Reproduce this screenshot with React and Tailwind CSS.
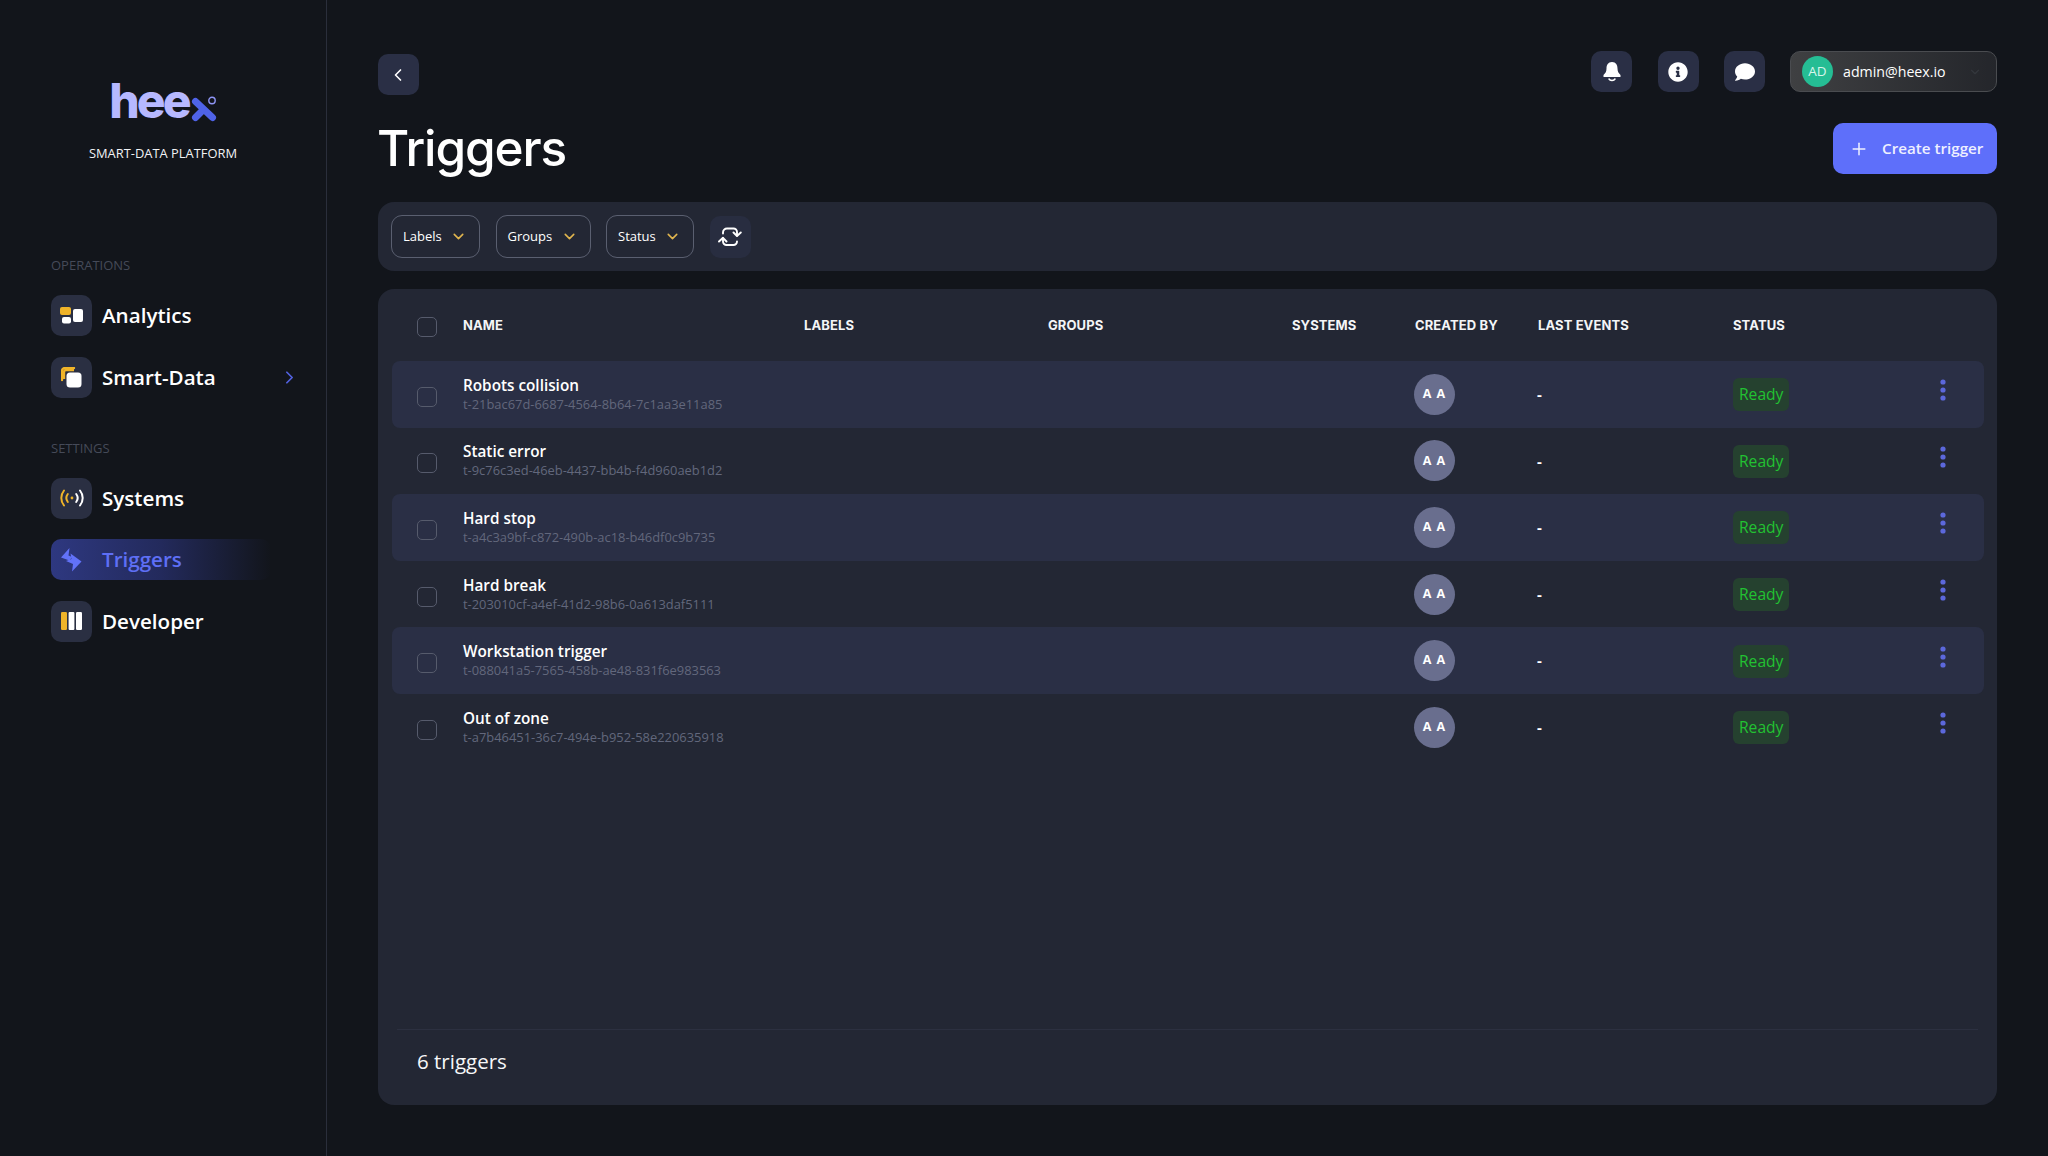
import React from 'react';
import { ChevronDown, ChevronLeft, ChevronRight, Plus } from 'lucide-react';
import { FaInfoCircle, FaComment } from 'react-icons/fa';

const triggers = [
  { name: 'Robots collision', id: 't-21bac67d-6687-4564-8b64-7c1aa3e11a85' },
  { name: 'Static error', id: 't-9c76c3ed-46eb-4437-bb4b-f4d960aeb1d2' },
  { name: 'Hard stop', id: 't-a4c3a9bf-c872-490b-ac18-b46df0c9b735' },
  { name: 'Hard break', id: 't-203010cf-a4ef-41d2-98b6-0a613daf5111' },
  { name: 'Workstation trigger', id: 't-088041a5-7565-458b-ae48-831f6e983563' },
  { name: 'Out of zone', id: 't-a7b46451-36c7-494e-b952-58e220635918' },
];

const columns = 'grid grid-cols-[46px_341px_244px_244px_123px_123px_195px_1fr] items-center';

const AnalyticsIcon = () => (
  <svg width="24" height="17" viewBox="0 0 24 17">
    <rect x="0" y="0" width="11" height="8" rx="2" fill="#f0b429" />
    <rect x="2" y="10" width="9" height="6.5" rx="2" fill="#fff" />
    <rect x="13" y="2" width="10" height="13" rx="2" fill="#fff" />
  </svg>
);

const SmartDataIcon = () => (
  <svg width="21" height="21" viewBox="0 0 21 21">
    <path d="M1 13V4a3 3 0 0 1 3-3h9" fill="none" stroke="#f0b429" strokeWidth="2.4" strokeLinecap="round" />
    <path d="M3 12V5a2 2 0 0 1 2-2h8" fill="none" stroke="#f0b429" strokeWidth="2.4" />
    <rect x="5.5" y="5.5" width="15" height="15" rx="3.5" fill="#fff" />
  </svg>
);

const SystemsIcon = () => (
  <svg width="24" height="18" viewBox="0 0 24 18" fill="none" strokeWidth="2" strokeLinecap="round">
    <path d="M4 1.5C0.4 6 0.4 12 4 16.5" stroke="#f0b429" />
    <path d="M7.8 5C6 7.4 6 10.6 7.8 13" stroke="#f0b429" />
    <circle cx="12" cy="9" r="1.4" fill="#f0b429" stroke="none" />
    <path d="M16.2 5C18 7.4 18 10.6 16.2 13" stroke="#fff" />
    <path d="M20 1.5C23.6 6 23.6 12 20 16.5" stroke="#fff" />
  </svg>
);

const TriggersIcon = () => (
  <svg width="21" height="24" viewBox="0 0 21 24" fill="#6272f8">
    <path d="M8.5 0L0 9.5L8.5 12.5L11 9L7.5 7.5Z" />
    <path d="M9.5 5.5L20.5 13.5L11 23.5L12 16L5 13L10.5 11Z" />
  </svg>
);

const DeveloperIcon = () => (
  <svg width="21" height="18" viewBox="0 0 21 18">
    <rect x="0" y="0" width="6" height="18" rx="1.2" fill="#f0b429" />
    <rect x="7.6" y="0" width="5.8" height="18" rx="1" fill="#fff" />
    <rect x="15" y="0" width="6" height="18" rx="1.2" fill="#fff" />
  </svg>
);

const BellIcon = () => (
  <svg width="20" height="21" viewBox="0 0 20 21" fill="#fff">
    <path d="M10 1C6 1 4.5 4 4.5 7.5C4.5 10.5 3.5 12 1.5 14V16H18.5V14C16.5 12 15.5 10.5 15.5 7.5C15.5 4 14 1 10 1Z" />
    <path d="M6.8 17.5C7.5 20 12.5 20 13.2 17.5" fill="none" stroke="#fff" strokeWidth="1.5" />
  </svg>
);

const RefreshIcon = () => (
  <svg width="24" height="20" viewBox="0 0 24 20" fill="none" stroke="#fff" strokeWidth="1.9" strokeLinecap="round" strokeLinejoin="round">
    <path d="M5 6.5V5.5A4 4 0 0 1 9 1.5H15.5A3.5 3.5 0 0 1 19 5V8.5" />
    <path d="M15.5 5.5L19 9L22.8 5.5" />
    <path d="M5 11V14.5A3.5 3.5 0 0 0 8.5 18H15.5A3.5 3.5 0 0 0 19 14.5" />
    <path d="M1 14.5L5 10.8L8.5 14.5" />
  </svg>
);

const NavItem = ({ icon, label, active }) => (
  <div
    className={`flex items-center h-[41px] rounded-[10px] ${
      active ? 'w-[220px] bg-gradient-to-r from-[#2e3880] via-[#232a5c] to-transparent' : ''
    }`}
  >
    <div className={`w-[41px] h-[41px] rounded-[10px] flex items-center justify-center ${active ? '' : 'bg-[#2a2f42]'}`}>
      {icon}
    </div>
    <span className={`ml-[10px] text-[20.6px] font-semibold ${active ? 'text-[#5e6ff5]' : 'text-white'}`}>{label}</span>
  </div>
);

const FilterButton = ({ label, width }) => (
  <button className={`${width} h-[43px] rounded-[11px] border border-[#5a5f70] flex items-center justify-between pl-[11px] pr-[12px] text-[13px] text-white`}>
    <span>{label}</span>
    <ChevronDown size={17} color="#e0b54e" strokeWidth={2.2} />
  </button>
);

const Checkbox = ({ className = '' }) => (
  <div className={`w-[20px] h-[20px] rounded-[5px] border border-[#565b6c] ${className}`} />
);

const Row = ({ item, striped }) => (
  <div className={`${columns} h-[66.6px] pl-[25px] rounded-[8px] ${striped ? 'bg-[#2a2f45]' : ''}`}>
    <Checkbox className="mt-[5px]" />
    <div className="mb-[1px]">
      <div className="text-[15.3px] leading-[20px] font-semibold text-white">{item.name}</div>
      <div className="text-[12.9px] leading-[18px] text-[#62677c]">{item.id}</div>
    </div>
    <div />
    <div />
    <div />
    <div className="w-[41px] h-[41px] rounded-full bg-[#696e8e] flex items-center justify-center text-white text-[12.5px] font-bold tracking-[1px] ml-[-1px]">
      A A
    </div>
    <div className="text-white text-[15px] font-bold ml-[-1px]">-</div>
    <div className="flex items-center justify-between pr-[38px]">
      <span className="h-[33px] mt-[1px] px-[6px] rounded-[6px] bg-[#25412f] text-[#22c232] text-[15.6px] leading-[33px]">Ready</span>
      <svg width="6" height="22" viewBox="0 0 6 22" className="mb-[8px]" fill="#5c68dc">
        <circle cx="3" cy="3" r="2.6" />
        <circle cx="3" cy="11" r="2.6" />
        <circle cx="3" cy="19" r="2.6" />
      </svg>
    </div>
  </div>
);

const App = () => {
  return (
    <div className="flex h-[1156px] w-[2048px] overflow-hidden bg-[#12151b] font-['Open_Sans',sans-serif] text-white">
      <aside className="w-[327px] shrink-0 border-r border-[#2a2e3b] pl-[51px]">
        <div className="w-[224px] mt-[77px] flex flex-col items-center">
          <div className="flex items-end h-[47px]">
            <span className="font-['Inter',sans-serif] font-extrabold text-[#b6b8ff] text-[48px] leading-[47px] tracking-[-2.8px]">hee</span>
            <svg width="26" height="26" viewBox="0 0 26 26" className="ml-[2px] mb-[2px]">
              <path d="M4.5 5.5L21.5 21.5" stroke="#4f63e8" strokeWidth="7" strokeLinecap="round" />
              <path d="M4.5 21.5L11 15" stroke="#4f63e8" strokeWidth="7" strokeLinecap="round" />
              <circle cx="21" cy="4.5" r="3.2" fill="#12151b" stroke="#8f95f5" strokeWidth="1.4" />
            </svg>
          </div>
          <div className="mt-[19px] text-[12.9px] leading-[20px] text-[#f1f2f5]">SMART-DATA PLATFORM</div>
        </div>

        <div className="mt-[93px] text-[13px] leading-[18px] text-[#454a58]">OPERATIONS</div>
        <div className="mt-[21px] flex flex-col gap-[20.5px]">
          <NavItem icon={<AnalyticsIcon />} label="Analytics" />
          <div className="relative w-[249px]">
            <NavItem icon={<SmartDataIcon />} label="Smart-Data" />
            <ChevronRight size={21} color="#5262e0" strokeWidth={2} className="absolute right-0 top-[10px]" />
          </div>
        </div>
        <div className="mt-[41px] text-[13px] leading-[18px] text-[#454a58]">SETTINGS</div>
        <div className="mt-[21px] flex flex-col gap-[20.5px]">
          <NavItem icon={<SystemsIcon />} label="Systems" />
          <NavItem icon={<TriggersIcon />} label="Triggers" active />
          <NavItem icon={<DeveloperIcon />} label="Developer" />
        </div>
      </aside>

      <main className="flex-1 px-[51px] pt-[51px]">
        <div className="flex justify-between h-[71px]">
          <button className="w-[41px] h-[41px] mt-[3px] rounded-[10px] bg-[#2a2f45] flex items-center justify-center pr-[2px]">
            <ChevronLeft size={20} color="#fff" strokeWidth={2} />
          </button>
          <div className="flex">
            <div className="flex gap-[25.5px]">
              <button className="w-[41px] h-[41px] rounded-[10px] bg-[#2a2f45] flex items-center justify-center">
                <BellIcon />
              </button>
              <button className="w-[41px] h-[41px] rounded-[10px] bg-[#2a2f45] flex items-center justify-center">
                <FaInfoCircle size={20} color="#fff" />
              </button>
              <button className="w-[41px] h-[41px] rounded-[10px] bg-[#2a2f45] flex items-center justify-center">
                <FaComment size={20} color="#fff" />
              </button>
            </div>
            <div className="ml-[25px] w-[207px] h-[41px] rounded-[10px] border border-[#4a4c50] bg-gradient-to-r from-[#3f4042] to-[#24262b] flex items-center pl-[11px] pr-[14px]">
              <div className="w-[31px] h-[31px] rounded-full bg-[#25bd94] flex items-center justify-center text-[13.5px] text-[#d8f5ec]">AD</div>
              <span className="ml-[10px] text-[14.2px] text-white">admin@heex.io</span>
              <ChevronDown size={14} color="#34373d" className="ml-auto" />
            </div>
          </div>
        </div>

        <div className="flex items-center justify-between h-[51px] mt-[1px]">
          <h1 className="font-['Inter',sans-serif] text-[49.5px] leading-[50px] font-medium tracking-[-1.1px] ml-[-1px] mb-[1px]">Triggers</h1>
          <button className="w-[164px] h-[51px] rounded-[10px] bg-[#5e6ffa] flex items-center pl-[16px] text-[15.2px] font-semibold text-[#eef0ff]">
            <Plus size={20} strokeWidth={1.8} />
            <span className="ml-[13px]">Create trigger</span>
          </button>
        </div>

        <div className="mt-[28px] h-[69px] rounded-[16px] bg-[#232734] flex items-center pl-[13px] gap-[15.5px]">
          <FilterButton label="Labels" width="w-[89px]" />
          <FilterButton label="Groups" width="w-[95px]" />
          <FilterButton label="Status" width="w-[88px]" />
          <button className="w-[41px] h-[42px] rounded-[10px] bg-[#282d40] flex items-center justify-center">
            <RefreshIcon />
          </button>
        </div>

        <div className="mt-[18px] h-[816px] rounded-[16px] bg-[#232734] flex flex-col">
          <div className={`${columns} h-[72px] ml-[14px] mr-[13px] pl-[25px] pt-[1px] font-['Inter',sans-serif] text-[13px] font-bold tracking-[0.1px] text-[#f4f5f7]`}>
            <Checkbox className="mt-[3px]" />
            <div>NAME</div>
            <div>LABELS</div>
            <div>GROUPS</div>
            <div>SYSTEMS</div>
            <div>CREATED BY</div>
            <div>LAST EVENTS</div>
            <div>STATUS</div>
          </div>
          <div className="ml-[14px] mr-[13px]">
            {triggers.map((item, i) => (
              <Row key={item.id} item={item} striped={i % 2 === 0} />
            ))}
          </div>
          <div className="mt-auto mx-[19px] h-[76px] border-t border-[#2c3040] pl-[20px] pb-[12px] flex items-center text-[20.5px] text-[#f6f7f9]">
            6 triggers
          </div>
        </div>
      </main>
    </div>
  );
};

export default App;
